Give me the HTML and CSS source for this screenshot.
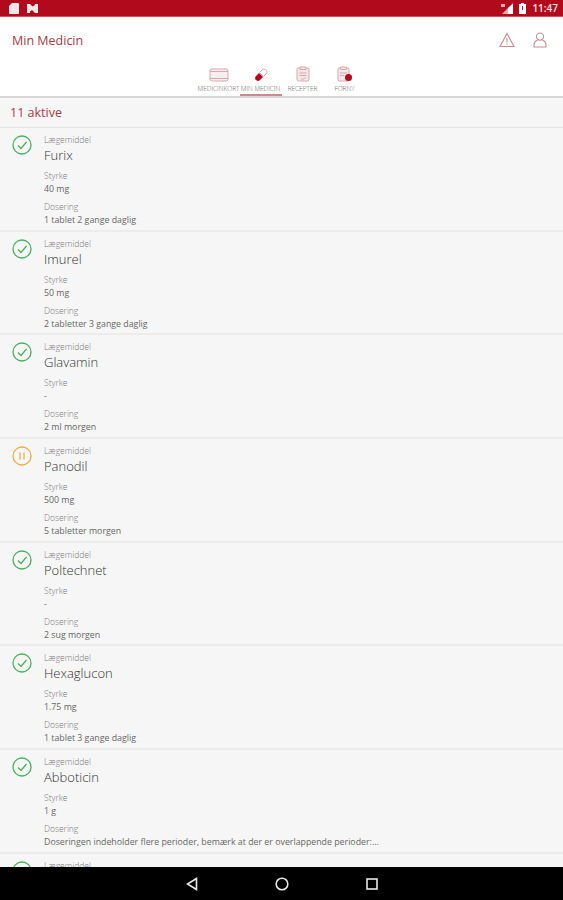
FILE: index.html
```html
<!DOCTYPE html>
<html lang="da">
  <head>
    <meta charset="UTF-8" />
    <meta name="viewport" content="width=device-width, initial-scale=1.0" />
    <title>Min Medicin</title>
    <link rel="stylesheet" href="styles.css">
  </head>
  <body>
    <div class="status-bar">
      <div class="status-left">
        <svg width="10" height="11" viewBox="0 0 10 11"><path d="M3 0h6a1 1 0 0 1 1 1v9a1 1 0 0 1-1 1H1a1 1 0 0 1-1-1V3z" fill="#f6e6e8"/></svg>
        <svg width="11" height="9" viewBox="0 0 11 9"><path d="M0 0h3l2.500 2.500L8 1V0h3v9H8L5 6 3 7.500V9H0z" fill="#f6e6e8"/></svg>
      </div>
      <div class="status-right">
        <svg width="13" height="11" viewBox="0 0 13 11"><path d="M13 0v11H2z" fill="#e7a9b0"/><path d="M8 5v6h5V1z" fill="#fff"/><path d="M1 1h4v3H1z" fill="#e7a9b0"/></svg>
        <svg width="7" height="11" viewBox="0 0 7 11"><path d="M2 0h3v1h2v10H0V1h2z" fill="#fff"/><path d="M3 3h1v4H3z" fill="#b10a1c"/></svg>
        <span class="clock">11:47</span>
      </div>
    </div>

    <header class="top">
      <div class="title-row">
        <h1>Min Medicin</h1>
        <div class="top-icons">
          <svg width="16" height="16" viewBox="0 0 16 16" fill="none" stroke="#c98a93" stroke-width="1.100"><path d="M8 1.500 15 14.500H1z"/><path d="M8 6v4.500M8 11.600v1"/></svg>
          <svg width="14" height="16" viewBox="0 0 14 16" fill="none" stroke="#c98a93" stroke-width="1.100"><circle cx="7" cy="4.600" r="3.600"/><path d="M4.600 8C2.500 9 1 10.500 1 12.500V15h12v-2.500C13 10.500 11.500 9 9.400 8"/></svg>
        </div>
      </div>
      <nav class="tabs">
        <div class="tab">
          <svg width="20" height="14" viewBox="0 0 20 14" fill="#f8eef0" stroke="#d3a9af"><rect x="1" y="1" width="18" height="12" rx="2"/><path d="M1 3.500h18M1 10.500h18"/></svg>
          <span>MEDICINKORT</span>
        </div>
        <div class="tab active">
          <svg width="16" height="14" viewBox="0 0 16 14"><path d="M6 5 10 9 7 12C5.800 13.200 4 13.200 2.900 12.100S1.800 9.200 3 8z" fill="#b10a1c"/><path d="M6.500 4.500 9 2C10.200.800 12 .800 13.100 1.900S14.200 4.800 13 6l-2.500 2.500z" fill="#fff" stroke="#d3a9af"/></svg>
          <span>MIN MEDICIN</span>
        </div>
        <div class="tab">
          <svg width="14" height="16" viewBox="0 0 14 16" fill="#f6e6e8" stroke="#d3a9af"><rect x="1" y="2" width="12" height="13" rx="1.500"/><path d="M4 1h6v2.500H4zM3.500 7h7M3.500 9.500h7M5 12.500l1.500 1 3-2"/></svg>
          <span>RECEPTER</span>
        </div>
        <div class="tab">
          <svg width="16" height="16" viewBox="0 0 16 16"><g fill="#f6e6e8" stroke="#d3a9af"><rect x="1" y="2" width="11" height="13" rx="1.500"/><path d="M3.500 1h6v2.500h-6zM3 7h7M3 9.500h4"/></g><circle cx="11.500" cy="11.500" r="3.500" fill="#b10a1c"/></svg>
          <span>FORNY</span>
        </div>
      </nav>
    </header>

    <main class="content">
      <div class="count">11 aktive</div>

      <article class="med">
        <svg class="state" viewBox="0 0 20 20"><circle cx="10" cy="10" r="9" class="ok"/><path d="M6 10.500l3 3 5.500-6.500" class="ok"/></svg>
        <div class="info">
          <div class="label">Lægemiddel</div>
          <div class="name">Furix</div>
          <div class="label">Styrke</div>
          <div class="value">40 mg</div>
          <div class="label">Dosering</div>
          <div class="value">1 tablet 2 gange daglig</div>
        </div>
      </article>

      <article class="med">
        <svg class="state" viewBox="0 0 20 20"><circle cx="10" cy="10" r="9" class="ok"/><path d="M6 10.500l3 3 5.500-6.500" class="ok"/></svg>
        <div class="info">
          <div class="label">Lægemiddel</div>
          <div class="name">Imurel</div>
          <div class="label">Styrke</div>
          <div class="value">50 mg</div>
          <div class="label">Dosering</div>
          <div class="value">2 tabletter 3 gange daglig</div>
        </div>
      </article>

      <article class="med">
        <svg class="state" viewBox="0 0 20 20"><circle cx="10" cy="10" r="9" class="ok"/><path d="M6 10.500l3 3 5.500-6.500" class="ok"/></svg>
        <div class="info">
          <div class="label">Lægemiddel</div>
          <div class="name">Glavamin</div>
          <div class="label">Styrke</div>
          <div class="value">-</div>
          <div class="label">Dosering</div>
          <div class="value">2 ml morgen</div>
        </div>
      </article>

      <article class="med">
        <svg class="state" viewBox="0 0 20 20"><circle cx="10" cy="10" r="9" class="paused"/><path d="M8 6.500v7M12 6.500v7" class="paused"/></svg>
        <div class="info">
          <div class="label">Lægemiddel</div>
          <div class="name">Panodil</div>
          <div class="label">Styrke</div>
          <div class="value">500 mg</div>
          <div class="label">Dosering</div>
          <div class="value">5 tabletter morgen</div>
        </div>
      </article>

      <article class="med">
        <svg class="state" viewBox="0 0 20 20"><circle cx="10" cy="10" r="9" class="ok"/><path d="M6 10.500l3 3 5.500-6.500" class="ok"/></svg>
        <div class="info">
          <div class="label">Lægemiddel</div>
          <div class="name">Poltechnet</div>
          <div class="label">Styrke</div>
          <div class="value">-</div>
          <div class="label">Dosering</div>
          <div class="value">2 sug morgen</div>
        </div>
      </article>

      <article class="med">
        <svg class="state" viewBox="0 0 20 20"><circle cx="10" cy="10" r="9" class="ok"/><path d="M6 10.500l3 3 5.500-6.500" class="ok"/></svg>
        <div class="info">
          <div class="label">Lægemiddel</div>
          <div class="name">Hexaglucon</div>
          <div class="label">Styrke</div>
          <div class="value">1.75 mg</div>
          <div class="label">Dosering</div>
          <div class="value">1 tablet 3 gange daglig</div>
        </div>
      </article>

      <article class="med">
        <svg class="state" viewBox="0 0 20 20"><circle cx="10" cy="10" r="9" class="ok"/><path d="M6 10.500l3 3 5.500-6.500" class="ok"/></svg>
        <div class="info">
          <div class="label">Lægemiddel</div>
          <div class="name">Abboticin</div>
          <div class="label">Styrke</div>
          <div class="value">1 g</div>
          <div class="label">Dosering</div>
          <div class="value">Doseringen indeholder flere perioder, bemærk at der er overlappende perioder:...</div>
        </div>
      </article>

      <article class="med">
        <svg class="state" viewBox="0 0 20 20"><circle cx="10" cy="10" r="9" class="ok"/><path d="M6 10.500l3 3 5.500-6.500" class="ok"/></svg>
        <div class="info">
          <div class="label">Lægemiddel</div>
        </div>
      </article>
    </main>

    <div class="nav-bar">
      <svg width="12" height="14" viewBox="0 0 12 14" fill="none" stroke="#e8e8e8" stroke-width="1.600"><path d="M10.500 1.500v11L1.500 7z"/></svg>
      <svg width="14" height="14" viewBox="0 0 14 14" fill="none" stroke="#e8e8e8" stroke-width="1.600"><circle cx="7" cy="7" r="5.800"/></svg>
      <svg width="12" height="12" viewBox="0 0 12 12" fill="none" stroke="#e8e8e8" stroke-width="1.600"><rect x="1" y="1" width="10" height="10"/></svg>
    </div>
  </body>
</html>
```

FILE: styles.css
```css
* {
  padding: 0;
  margin: 0;
  box-sizing: border-box;
}
body {
  width: 563px;
  height: 900px;
  overflow: hidden;
  display: flex;
  flex-direction: column;
  background-color: #f6f6f6;
  font-family: "Open Sans", "Liberation Sans", sans-serif;
}
.status-bar {
  height: 17px;
  flex: none;
  background-color: #b10a1c;
  border-bottom: 1px solid #d0525f;
  display: flex;
  justify-content: space-between;
  align-items: center;
  padding: 0 5px 0 9px;
}
.status-left,
.status-right {
  display: flex;
  align-items: center;
}
.status-left {
  gap: 8px;
}
.status-right {
  gap: 6px;
}
.clock {
  color: #f5e3e5;
  font-size: 10px;
  font-weight: 600;
}
.top {
  flex: none;
  height: 81px;
  background-color: #fff;
  border-bottom: 2px solid #d6d6d6;
  display: flex;
  flex-direction: column;
}
.title-row {
  display: flex;
  justify-content: space-between;
  align-items: center;
  height: 46px;
  padding: 0 16px 0 12px;
}
h1 {
  font-size: 12.500px;
  font-weight: 400;
  color: #a83a47;
}
.top-icons {
  display: flex;
  align-items: center;
  gap: 18px;
}
.tabs {
  display: flex;
  justify-content: center;
}
.tab {
  width: 42px;
  height: 33px;
  display: flex;
  flex-direction: column;
  align-items: center;
  justify-content: flex-end;
  gap: 2px;
  font-size: 6.500px;
  font-weight: 300;
  color: #666;
  white-space: nowrap;
  padding-bottom: 3px;
}
.tab.active {
  border-bottom: 2px solid #c98a93;
  padding-bottom: 1px;
}
.content {
  flex: 1;
  min-height: 0;
  overflow: hidden;
}
.count {
  height: 30px;
  padding: 0 10px;
  display: flex;
  align-items: center;
  font-size: 12.500px;
  font-weight: 400;
  color: #a83a47;
  border-bottom: 1px solid #e4e4e4;
}
.med {
  height: 103.700px;
  display: flex;
  gap: 12px;
  padding: 6px 12px 0;
  border-bottom: 2px solid #ececec;
}
.state {
  width: 20px;
  height: 20px;
  flex: none;
  margin-top: 1px;
  fill: none;
  stroke-width: 1.300;
}
.ok {
  stroke: #4caf5f;
}
.paused {
  stroke: #eeab4c;
}
.label {
  font-size: 8.500px;
  line-height: 11px;
  font-weight: 300;
  color: #777;
}
.name {
  font-size: 13px;
  line-height: 20px;
  font-weight: 300;
  color: #333;
  margin-bottom: 5px;
}
.value {
  font-size: 8.800px;
  line-height: 17px;
  color: #666;
  margin-bottom: 3px;
}
.nav-bar {
  flex: none;
  height: 33px;
  background-color: #000;
  display: flex;
  justify-content: center;
  align-items: center;
  gap: 77px;
}
```
